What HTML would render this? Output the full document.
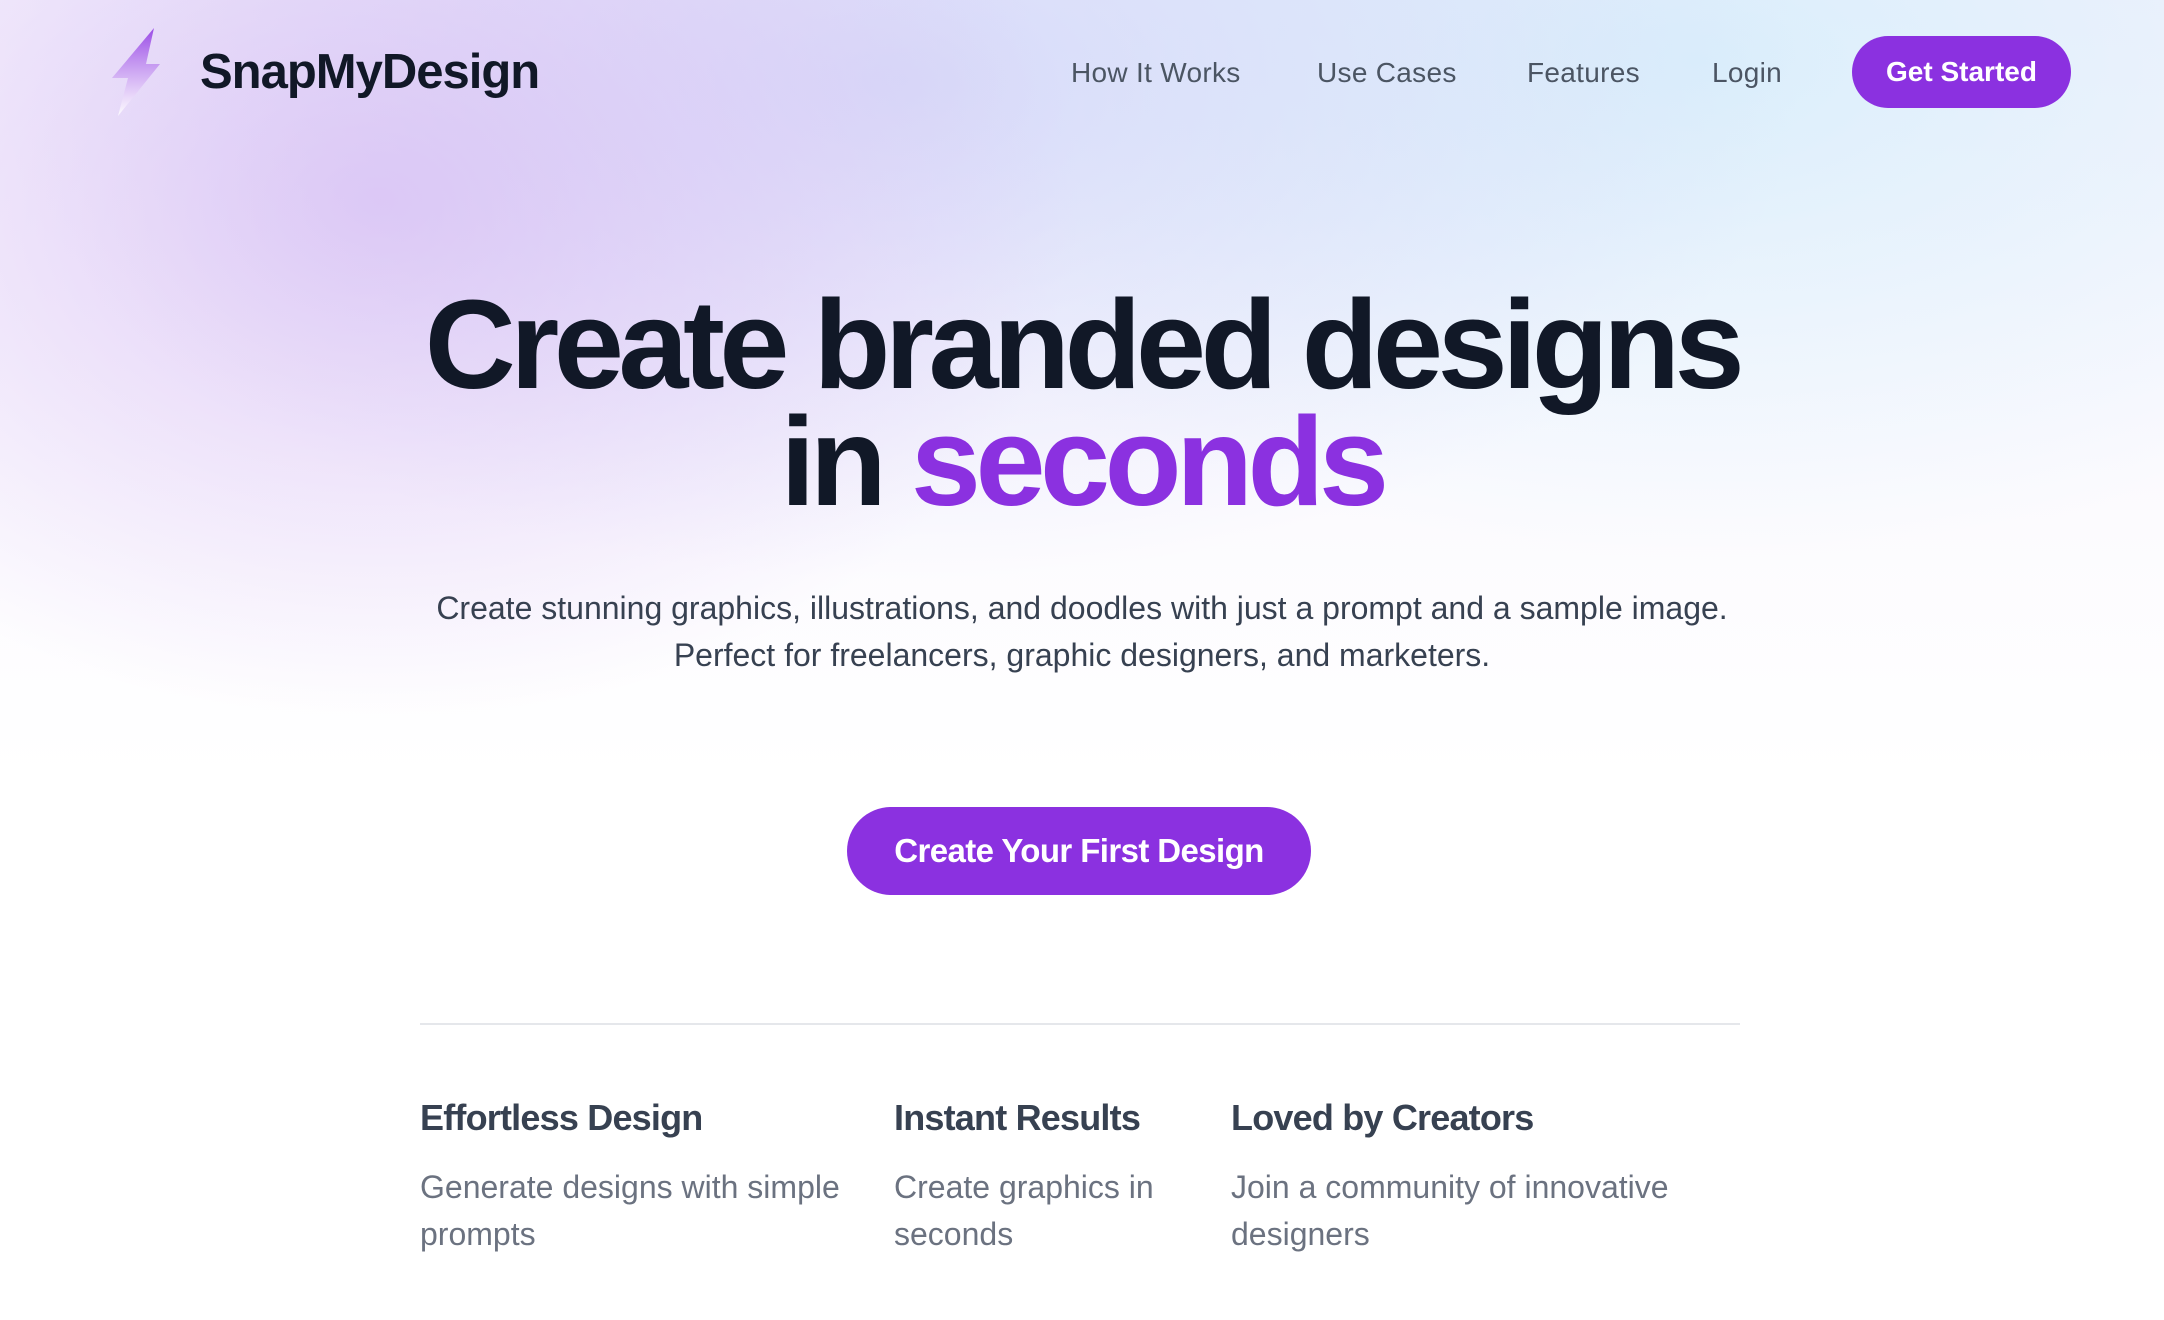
<!DOCTYPE html>
<html><head><meta charset="utf-8">
<style>
*{margin:0;padding:0;box-sizing:border-box}
html,body{width:2164px;height:1320px;overflow:hidden;background:#fff;font-family:"Liberation Sans",Arial,sans-serif}
.bg{position:absolute;inset:0;
background:
radial-gradient(ellipse 700px 520px at 380px 200px, rgba(205,170,240,0.55), rgba(205,170,240,0) 100%),
radial-gradient(ellipse 900px 500px at 900px 80px, rgba(190,195,245,0.5), rgba(190,195,245,0) 100%),
radial-gradient(ellipse 900px 500px at 1700px 60px, rgba(200,235,250,0.6), rgba(200,235,250,0) 100%),
linear-gradient(180deg, rgba(240,235,252,0.6) 0px, rgba(255,255,255,0) 780px);}
.abs{position:absolute}
.nav{font-size:28px;color:#4b5563;top:57px;letter-spacing:0.3px}
.btn{background:#8b31e0;color:#fff;font-weight:bold;border-radius:50px;display:flex;align-items:center;justify-content:center}
h1{position:absolute;left:0;width:2164px;text-align:center;font-size:126px;letter-spacing:-5.5px;font-weight:bold;color:#111827;line-height:117px;top:286px}
.p{position:absolute;left:0;width:2164px;text-align:center;font-size:32px;color:#374151;line-height:47px;top:585px}
.fh{font-size:36px;font-weight:bold;color:#374151;top:1097px;letter-spacing:-0.8px}
.fd{font-size:32px;color:#6b7280;line-height:47px;top:1164px}
</style></head><body>
<div class="bg"></div>
<svg class="abs" style="left:110px;top:26px" width="56" height="94" viewBox="0 0 56 94">
<defs><linearGradient id="g" x1="0" y1="0" x2="0" y2="1"><stop offset="0" stop-color="#9b4de6"/><stop offset="1" stop-color="#ffffff" stop-opacity="0.9"/></linearGradient></defs>
<path d="M44 2 L36 38 L50 38 L8 90 L18 52 L2 52 Z" fill="url(#g)"/>
</svg>
<div class="abs" style="left:200px;top:44px;font-size:49px;font-weight:bold;color:#111827;letter-spacing:-1px">SnapMyDesign</div>
<div class="abs nav" style="left:1071px">How It Works</div>
<div class="abs nav" style="left:1317px">Use Cases</div>
<div class="abs nav" style="left:1527px">Features</div>
<div class="abs nav" style="left:1712px">Login</div>
<div class="abs btn" style="left:1852px;top:36px;width:219px;height:72px;font-size:28px">Get Started</div>
<h1>Create branded designs<br>in <span style="color:#8b31e0">seconds</span></h1>
<div class="p">Create stunning graphics, illustrations, and doodles with just a prompt and a sample image.<br>Perfect for freelancers, graphic designers, and marketers.</div>
<div class="abs btn" style="left:847px;top:807px;width:464px;height:88px;font-size:33px;letter-spacing:-0.6px">Create Your First Design</div>
<div class="abs" style="left:420px;top:1023px;width:1320px;height:2px;background:#e5e7eb"></div>
<div class="abs fh" style="left:420px">Effortless Design</div>
<div class="abs fh" style="left:894px">Instant Results</div>
<div class="abs fh" style="left:1231px">Loved by Creators</div>
<div class="abs fd" style="left:420px;width:450px">Generate designs with simple prompts</div>
<div class="abs fd" style="left:894px;width:300px">Create graphics in seconds</div>
<div class="abs fd" style="left:1231px;width:470px">Join a community of innovative designers</div>
</body></html>
